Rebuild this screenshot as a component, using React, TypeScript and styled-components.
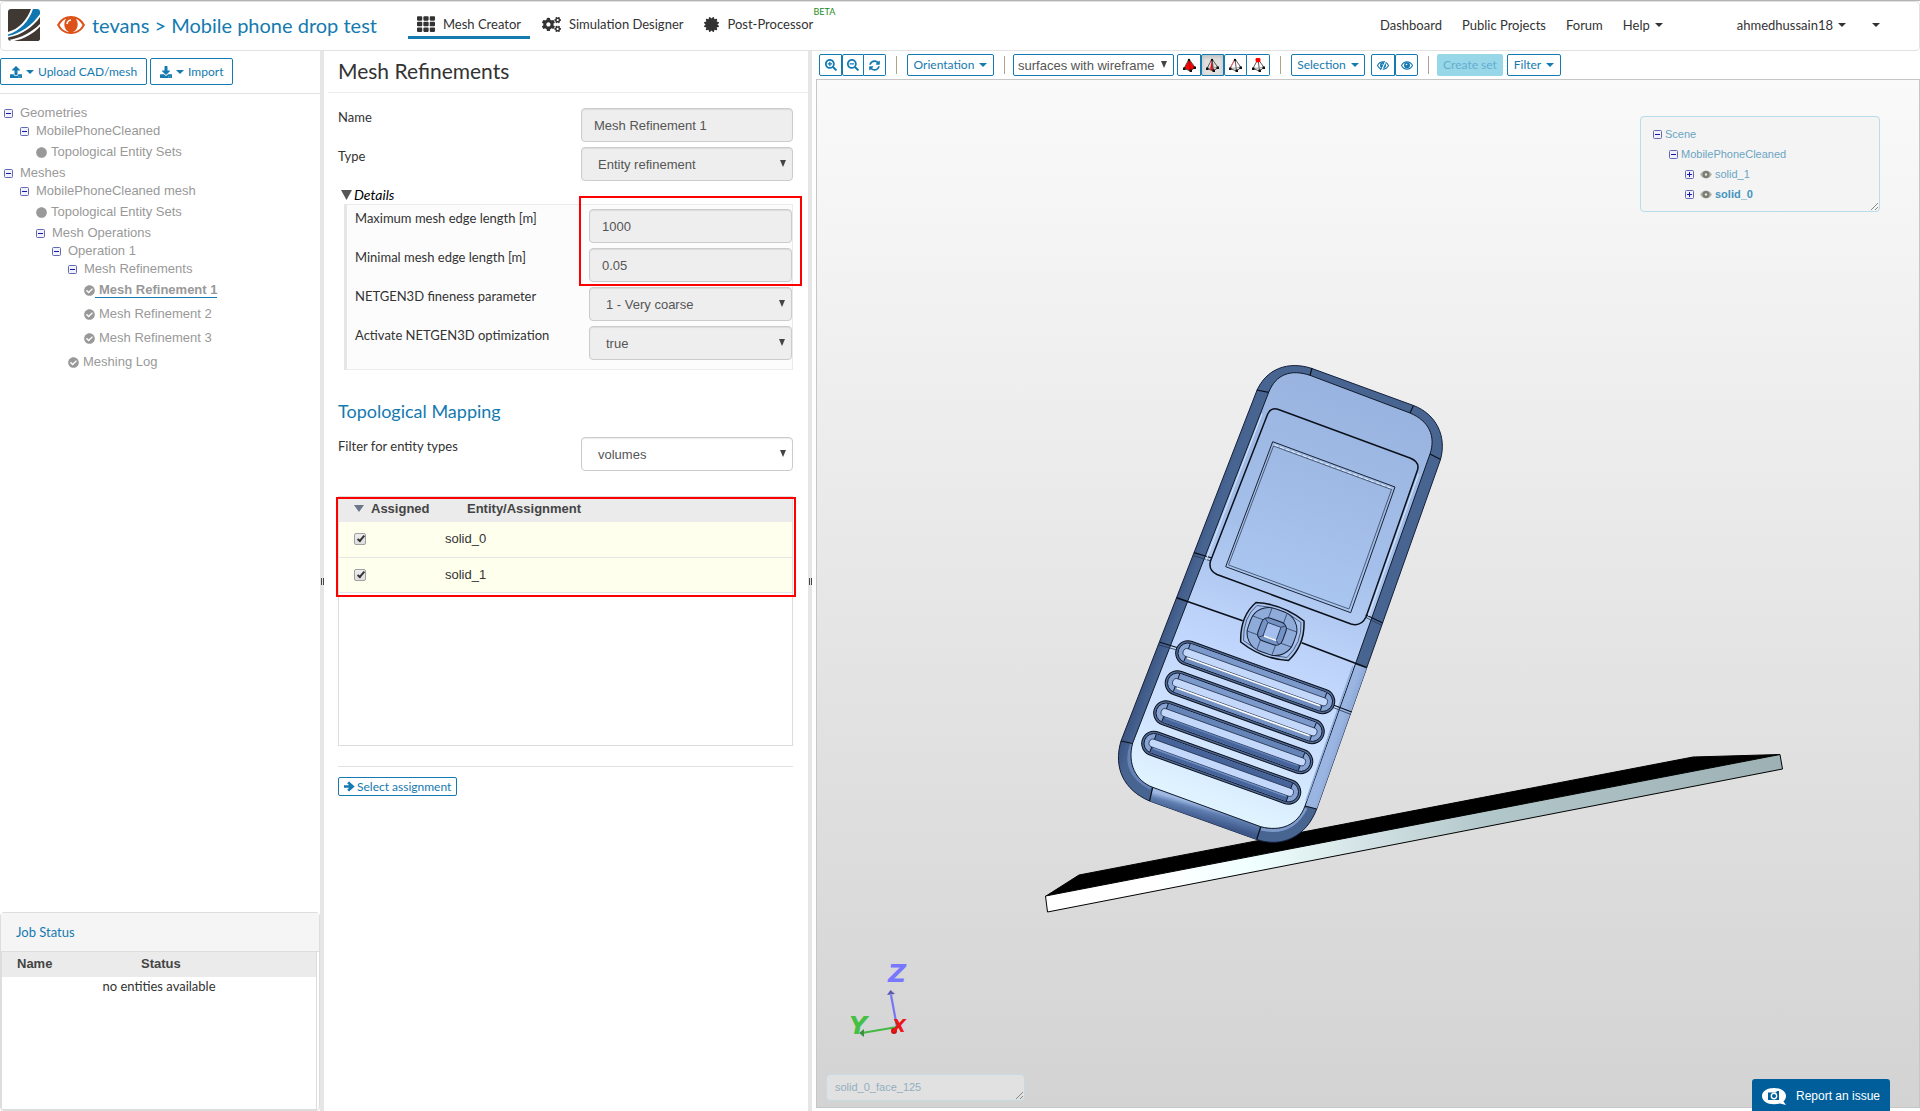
import React from "react";
import styled, { createGlobalStyle, css } from "styled-components";
import {
  FaUpload, FaDownload, FaTh, FaCogs, FaCertificate, FaSearchPlus, FaSearchMinus,
  FaSyncAlt, FaCheckCircle, FaCircle,
} from "react-icons/fa";

const blue = "#147ab0";
const sans = '"Liberation Sans", Arial, sans-serif';
const lato = 'Lato, "Liberation Sans", sans-serif';

const GlobalStyle = createGlobalStyle`
  *, *::before, *::after { box-sizing: border-box; }
  body { margin: 0; background: #fff; color: #333; font: 13px/20px ${lato}; }
  button, input, select { margin: 0; font: inherit; color: inherit; }
  svg { display: block; flex: none; }
  ul { list-style: none; margin: 0; padding: 0; }
  a { color: inherit; text-decoration: none; }
`;

const Page = styled.div`
  display: grid;
  grid-template-rows: auto 1fr;
  height: 100vh;
  min-height: 960px;
  border-top: 1px solid #b4b4b4;
`;

/* ---------- header ---------- */
const Header = styled.header`
  display: flex;
  align-items: center;
  height: 50px;
  padding: 0 39px 2px 7px;
  border: 1px solid #e2e2e2;
  border-radius: 4px;
`;
const ProjectLink = styled.a`
  display: flex;
  align-items: center;
  gap: 7px;
  margin-left: 17px;
  font-size: 20px;
  line-height: 24px;
  color: ${blue};
`;
const Tabs = styled.nav`
  display: flex;
  gap: 3px;
  margin: 0 0 2px 31px;
`;
const Tab = styled.a<{ $active?: boolean }>`
  position: relative;
  display: flex;
  align-items: center;
  gap: 8px;
  height: 30px;
  padding: 3px 9px 0;
  border-bottom: 3px solid ${(p) => (p.$active ? blue : "transparent")};
`;
const Beta = styled.span`
  position: absolute;
  top: -3px;
  right: -13px;
  font-size: 9px;
  line-height: 12px;
  color: #1d8c1d;
`;
const NavLinks = styled.nav`
  display: flex;
  align-items: center;
  gap: 20px;
  margin-left: auto;
`;
const NavLink = styled.a<{ $gap?: number }>`
  display: flex;
  align-items: center;
  gap: 5px;
  min-height: 20px;
  margin-left: ${(p) => p.$gap || 0}px;
`;
const Caret = styled.i`
  border: 4px solid transparent;
  border-top-color: currentColor;
  border-bottom: 0;
`;

/* ---------- columns ---------- */
const Columns = styled.main`
  display: grid;
  grid-template-columns: 320px 4px 484px 4px minmax(0, 1fr);
  min-height: 0;
`;
const Splitter = styled.div`
  display: flex;
  align-items: center;
  justify-content: center;
  background: #e6e6e6;
  &::after {
    content: "";
    width: 3px;
    height: 7px;
    border: solid #444;
    border-width: 0 1px;
  }
`;
const Sidebar = styled.aside`
  display: flex;
  flex-direction: column;
  min-height: 0;
`;
const SideTools = styled.div`
  display: flex;
  gap: 3px;
  padding: 7px 0 8px;
  border-bottom: 1px solid #e2e2e2;
`;
const buttonLook = css`
  display: flex;
  align-items: center;
  justify-content: center;
  border: 1px solid ${blue};
  border-radius: 2px;
  background: #fff;
  color: ${blue};
  font-size: 12px;
  white-space: nowrap;
`;
const SideButton = styled.button`
  ${buttonLook}
  gap: 4px;
  height: 27px;
  padding: 0 9px;
`;
const Tree = styled.ul`
  flex: 1;
  && { padding-top: 10px; }
  font-family: ${sans};
  font-size: 13px;
  color: #999;
`;
const TreeRow = styled.li<{ $level: number; $leaf?: boolean }>`
  display: flex;
  align-items: center;
  height: ${(p) => (p.$leaf ? 24 : 18)}px;
  padding-left: ${(p) => 4 + p.$level * 16}px;
`;
const TreeText = styled.a<{ $current?: boolean; $leaf?: boolean }>`
  padding-left: ${(p) => (p.$leaf ? 4 : 7)}px;
  line-height: 15px;
  border-bottom: 1px solid transparent;
  ${(p) => p.$current && css`font-weight: bold; border-color: ${blue};`}
`;
const JobPanel = styled.section`
  display: flex;
  flex-direction: column;
  height: 199px;
  padding-right: 2px;
  border: 1px solid #ddd;
  border-radius: 4px;
`;
const JobTitle = styled.h2`
  margin: 0 -2px 0 0;
  padding: 9px 15px;
  border-bottom: 1px solid #ddd;
  background: #f5f5f5;
  font-size: 13px;
  line-height: 20px;
  font-weight: 400;
  color: ${blue};
`;
const JobTableBox = styled.div`
  flex: 1;
  border: 1px solid #ddd;
  border-top: 0;
`;
const DataTable = styled.table`
  width: 100%;
  table-layout: fixed;
  border-collapse: collapse;
  td { padding: 0; }
`;
const HeadCell = styled.th<{ $width?: number; $indent: number }>`
  width: ${(p) => (p.$width ? p.$width + "px" : "auto")};
  height: 25px;
  padding: 0 0 2px ${(p) => p.$indent}px;
  background: #ebebeb;
  font: bold 13px/20px ${sans};
  color: #444;
  text-align: left;
`;
const EmptyCell = styled.td`
  line-height: 18px;
  text-align: center;
`;

/* ---------- form ---------- */
const FormPanel = styled.section`
  padding-left: 4px;
`;
const PanelTitle = styled.h1`
  margin: 0;
  padding: 6px 10px 7px;
  border-bottom: 1px solid #ebebeb;
  font-size: 21px;
  line-height: 28px;
  font-weight: 400;
`;
const FormBody = styled.div`
  padding: 15px 15px 0 10px;
`;
const Field = styled.div`
  display: flex;
  justify-content: space-between;
  margin-bottom: 5px;
`;
const FieldLabel = styled.label`
  line-height: 18px;
`;
const control = css<{ $width?: number }>`
  width: ${(p) => p.$width || 212}px;
  height: 34px;
  border: 1px solid #ccc;
  border-radius: 4px;
  background: #fff;
  box-shadow: inset 0 1px 1px rgba(0, 0, 0, 0.08);
  font: 13px/20px ${sans};
  color: #555;
  &:disabled { background: #eee; opacity: 1; }
`;
const TextBox = styled.input`
  ${control}
  padding: 0 12px;
`;
const SelectFrame = styled.span`
  position: relative;
  display: flex;
  svg { position: absolute; right: 7px; top: 50%; margin-top: -4px; pointer-events: none; }
`;
const SelectControl = styled.select`
  ${control}
  padding: 1px 16px 0;
  appearance: none;
`;
const Details = styled.section`
  margin: 0 0 29px 6px;
`;
const Summary = styled.h3`
  display: flex;
  align-items: center;
  gap: 2px;
  margin: -1px 0 -1px -3px;
  font-size: 14px;
  line-height: 20px;
  font-style: italic;
  font-weight: 400;
  color: #000;
`;
const DetailBox = styled.div`
  position: relative;
  padding: 4px 0 4px 8px;
  border: 1px solid #ebebeb;
  border-left: 3px solid #e6e6e6;
  background: #fcfcfc;
`;
const Marker = styled.div<{ $inset: string }>`
  position: absolute;
  inset: ${(p) => p.$inset};
  border: 2px solid #f00;
  pointer-events: none;
`;
const SectionTitle = styled.h2`
  margin: 0 0 14px;
  font-size: 18px;
  line-height: 24px;
  font-weight: 400;
  color: ${blue};
`;
const AssignBox = styled.div`
  position: relative;
  height: 250px;
  margin: 25px 0 20px;
  border: 1px solid #ddd;
`;
const AssignRow = styled.tr`
  height: 35px;
  border-bottom: 1px solid #e6e6e6;
  background: #ffffed;
  font: 13px/20px ${sans};
`;
const CheckCell = styled.td`
  && { padding-left: 15px; }
`;
const CheckBox = styled.input`
  display: block;
  appearance: none;
  width: 12px;
  height: 12px;
  border: 1px solid #a0a0a0;
  border-radius: 2px;
  background: linear-gradient(#eee, #ddd);
  &:checked::after {
    content: "";
    display: block;
    width: 4px;
    height: 8px;
    margin: 0 0 0 4px;
    border: solid #333;
    border-width: 0 2px 2px 0;
    transform: rotate(40deg);
  }
`;
const SortLabel = styled.span`
  display: flex;
  align-items: center;
  gap: 7px;
`;
const Footer = styled.div`
  display: flex;
  padding-top: 10px;
  border-top: 1px solid #e2e2e2;
`;
const SmallButton = styled.button`
  ${buttonLook}
  gap: 2px;
  height: 19px;
  padding: 0 5px 0 5px;
`;

/* ---------- viewer ---------- */
const Viewer = styled.section`
  display: flex;
  flex-direction: column;
  min-height: 0;
  padding: 3px 0 3px 4px;
`;
const Toolbar = styled.div`
  display: flex;
  align-items: center;
  height: 22px;
  margin: 0 0 3px 3px;
`;
const Group = styled.div<{ $gap: number }>`
  display: flex;
  margin-left: ${(p) => p.$gap}px;
`;
const ToolButton = styled.button<{ $width: number; $on?: boolean; $flat?: boolean; $gap?: number }>`
  ${buttonLook}
  gap: 5px;
  width: ${(p) => p.$width}px;
  height: 22px;
  padding: 0;
  margin-left: ${(p) => p.$gap || 0}px;
  ${(p) => p.$on && css`background: #e0e0e0; box-shadow: inset 0 2px 4px rgba(0, 0, 0, 0.15);`}
  ${(p) => p.$flat && css`background: #98d7e8; border-color: #98d7e8; color: #64aed0;`}
  ${Group} > & + & { border-left: 0; }
  ${Group} > &:not(:last-child) { border-top-right-radius: 0; border-bottom-right-radius: 0; }
  ${Group} > & + & { border-top-left-radius: 0; border-bottom-left-radius: 0; }
`;
const Divider = styled.span<{ $tight?: boolean }>`
  width: 1px;
  height: 18px;
  margin: 0 ${(p) => (p.$tight ? 8 : 10)}px 0 10px;
  background: #b0a28c;
`;
const ModeSelect = styled.select`
  width: 161px;
  height: 22px;
  padding: 2px 4px 0;
  border: 1px solid ${blue};
  border-radius: 2px;
  background: #fff;
  appearance: none;
  font: 13px/18px ${sans};
  color: #555;
`;
const Canvas = styled.div`
  position: relative;
  flex: 1;
  min-height: 0;
  border: 1px solid #c6c6c6;
  background: linear-gradient(#fafafa, #d3d3d3);
  overflow: hidden;
`;
const Model = styled.svg`
  width: 100%;
  height: 100%;
`;
const ScenePanel = styled.ul`
  position: absolute;
  top: 36px;
  right: 39px;
  width: 240px;
  height: 96px;
  && { padding: 7px 12px; }
  border: 1px solid #b8dcea;
  border-radius: 4px;
  background: #f4f4f4;
  font: 11px/20px ${sans};
  color: #6ba5c3;
`;
const SceneRow = styled.li<{ $level: number; $current?: boolean }>`
  display: flex;
  align-items: center;
  gap: 3px;
  height: 20px;
  padding-left: ${(p) => p.$level * 16}px;
  ${(p) => p.$current && css`font-weight: bold; color: #4394bd;`}
  svg + svg { margin-left: 3px; }
`;
const Grip = styled.svg`
  position: absolute;
  right: 1px;
  bottom: 1px;
`;
const PickedFace = styled.div`
  position: absolute;
  left: 9px;
  bottom: 6px;
  width: 199px;
  height: 27px;
  padding: 0 8px;
  border: 1px solid #c6dae3;
  border-radius: 4px;
  background: #e1e1e1;
  font: 11px/25px ${sans};
  color: #92afbf;
`;
const ReportButton = styled.button`
  position: fixed;
  right: 30px;
  bottom: 0;
  display: flex;
  align-items: center;
  gap: 10px;
  width: 138px;
  height: 32px;
  padding: 2px 10px 0;
  border: 0;
  border-radius: 3px 3px 0 0;
  background: #005f9b;
  color: #fff;
  font: 12px/20px ${sans};
  white-space: nowrap;
`;

/* ---------- small drawings ---------- */
const Logo = () => (
  <svg width="32" height="32" viewBox="0 0 32 32" aria-label="Home">
    <rect width="32" height="32" rx="3" fill="#3f3833" />
    <path d="M0 23C11 20 19 11 23 0h9v17.500C25 25 16 30 6 32H3L0 30z" fill="#fff" />
    <path d="M0 25.500C12 22 21 12 25 0h4q3 0 3 3v2C24 16 14 24 0 27z" fill="#0f76b1" />
    <path d="M0 28.500C14 26 25 18 32 8v7C24 23 13 29 1 31q-1-1-1-2.500z" fill="#3f3833" />
    <path d="M10 32C19 29 27 24 32 19v10q0 3-3 3z" fill="#3f3833" />
  </svg>
);
const BigEye = () => (
  <svg width="28" height="18" viewBox="0 0 28 18">
    <path d="M0 9C6-3 22-3 28 9 22 21 6 21 0 9z" fill="#dd5218" />
    <path d="M2.500 9C5 5 7 3.500 9 3 6 7 7 14 12 16 7 15.500 4 12 2.500 9zM25.500 9C23 5 21 3.500 19 3c3 4 2 11-3 13 5-.5 8-4 9.500-7z" fill="#fff" />
    <path d="M10 8q.5-3.500 4-4" fill="none" stroke="#fff" strokeWidth="1.500" />
  </svg>
);
const Eye = ({ color = blue, off = false }: { color?: string; off?: boolean }) => (
  <svg width="12" height="9" viewBox="0 0 12 9">
    <path d="M.5 4.500C3-.3 9-.3 11.500 4.500 9 9.300 3 9.300.5 4.500z" fill="none" stroke={color} strokeWidth="1.100" />
    <circle cx="6" cy="4.300" r="3" fill={color} />
    <circle cx="5.500" cy="3.500" r=".8" fill="#fff" />
    {off && <path d="M4.500 9L8.500 0" stroke="#fff" strokeWidth="1.500" />}
    {off && <path d="M3.500 9L7.500 0" stroke={color} strokeWidth="1" />}
  </svg>
);
const SceneEye = () => (
  <svg width="12" height="9" viewBox="0 0 12 9">
    <path d="M0 4.500C3-.8 9-.8 12 4.500 9 9.800 3 9.800 0 4.500z" fill="#b4b4ae" />
    <circle cx="6" cy="4.500" r="3.500" fill="#7b7b72" />
    <circle cx="6" cy="4.500" r="1.200" fill="#e8e8e0" />
  </svg>
);
const BoldArrow = () => (
  <svg width="11" height="11" viewBox="0 0 11 11">
    <path d="M0 4.200h5.200L3.200 2.200 5 .4 10.700 5.500 5 10.600 3.200 8.800 5.200 6.800H0z" fill={blue} />
  </svg>
);
const Toggle = ({ open = true }: { open?: boolean }) => (
  <svg width="9" height="9" viewBox="0 0 9 9">
    <rect x=".5" y=".5" width="8" height="8" rx="1" fill="#f1f1fa" stroke="#6468b0" />
    <path d={open ? "M2 4.500h5" : "M2 4.500h5M4.500 2v5"} stroke="#1717b0" />
  </svg>
);
const Arrow = ({ w = 6, h = 7, color = "#444" }) => (
  <svg width={w} height={h} viewBox="0 0 10 10" preserveAspectRatio="none">
    <path d="M0 0h10L5 10z" fill={color} />
  </svg>
);
const GripMark = () => (
  <Grip width="8" height="8" viewBox="0 0 8 8">
    <path d="M1 8L8 1M5 8L8 5" stroke="#888" />
  </Grip>
);
const MeshIcon = ({ kind }: { kind: number }) => (
  <svg width="13" height="14" viewBox="0 0 13 14">
    <path d="M6 1L1 10.500L7.500 13L12 9.500z" fill={kind === 0 ? "#f00" : "none"} stroke="#444" strokeWidth=".9" />
    {kind === 1 && <path d="M6 1L4 11.500L7.500 13z" fill="#f00" />}
    <path d="M6 1L7.500 13" stroke={kind === 0 ? "#a00" : "#444"} strokeWidth=".9" />
    {kind > 0 && <path d="M1 10.500L12 9.500" stroke="#777" strokeWidth=".7" />}
    {kind === 2 && <path d="M6 1L1 10.500" stroke="#f66" strokeWidth="1" />}
    <g fill="#111">
      <rect x="0" y="9.500" width="2.500" height="2.500" />
      <rect x="6.500" y="11.500" width="2.500" height="2.500" />
      <rect x="10.500" y="8.500" width="2.500" height="2.500" />
    </g>
    <circle cx="6" cy="2" r={kind === 3 ? 2.5 : 1.2} fill={kind === 3 ? "#f00" : "#111"} />
  </svg>
);

const grooves = [
  { x: 1188, y: 653, upper: "#7c99cb", lower: "#6e8bbd", shine: "#fff" },
  { x: 1177.5, y: 683, upper: "#7c99cb", lower: "#7390c2", shine: "#fff" },
  { x: 1166, y: 713, upper: "#6584b8", lower: "#46649a", shine: "#5f7fb5" },
  { x: 1154, y: 743.5, upper: "#46649a", lower: "#46649a", shine: "#6f8fc2" },
];

const Scene3D = () => (
  <Model viewBox="817 80 1102 1027" preserveAspectRatio="xMidYMid meet" aria-label="3D model">
    <defs>
      <linearGradient id="face" gradientUnits="userSpaceOnUse" x1="1360" y1="390" x2="1200" y2="830">
        <stop offset="0" stopColor="#98b3df" />
        <stop offset=".35" stopColor="#a4c0ea" />
        <stop offset=".6" stopColor="#c0d5fb" />
        <stop offset=".8" stopColor="#cfe3ff" />
        <stop offset="1" stopColor="#e6faff" />
      </linearGradient>
      <linearGradient id="screen" gradientUnits="userSpaceOnUse" x1="1335" y1="460" x2="1285" y2="600">
        <stop offset="0" stopColor="#9db8e2" />
        <stop offset="1" stopColor="#aac7f2" />
      </linearGradient>
      <linearGradient id="rim" gradientUnits="userSpaceOnUse" x1="1180" y1="570" x2="1194" y2="575">
        <stop offset="0" stopColor="#3a5280" />
        <stop offset="1" stopColor="#486592" />
      </linearGradient>
      <linearGradient id="lowRim" gradientUnits="userSpaceOnUse" x1="1335" y1="740" x2="1350" y2="745">
        <stop offset="0" stopColor="#9ab5e2" />
        <stop offset="1" stopColor="#7d99c8" />
      </linearGradient>
      <linearGradient id="bottomRim" gradientUnits="userSpaceOnUse" x1="1206" y1="806" x2="1202" y2="821">
        <stop offset="0" stopColor="#9fb9e4" />
        <stop offset=".35" stopColor="#5f7db0" />
        <stop offset="1" stopColor="#3d5788" />
      </linearGradient>
      <linearGradient id="plate">
        <stop offset="0" stopColor="#fff" />
        <stop offset=".15" stopColor="#fff" />
        <stop offset=".28" stopColor="#f0ffff" />
        <stop offset=".45" stopColor="#d0e0e2" />
        <stop offset=".6" stopColor="#b2c7ca" />
        <stop offset="1" stopColor="#9db1b5" />
      </linearGradient>
    </defs>

    <path d="M1046 896L1079 875L1693 757L1780 754.500z" fill="#000" stroke="#000" />
    <path d="M1045.500 896L1780 754.500L1782.500 769L1047.500 912z" fill="url(#plate)" stroke="#000" strokeWidth="1" />

    <path d="M1256.700 391C1266 369 1288 360.500 1312 368.500L1413.500 405.500C1436 414 1447 436 1440.500 459.500L1316.700 809C1306 837 1282 848 1256.700 839.500L1149.500 801C1124 790 1113 768 1121 741z" fill="url(#rim)" stroke="#14203a" strokeWidth="1" />
    <path d="M1366.700 668L1316.700 809L1305 806L1354 664z" fill="url(#lowRim)" />
    <path d="M1153 787L1149.500 801L1256.700 839.500L1261 826.500z" fill="url(#bottomRim)" />
    <path d="M1132.700 743Q1121 772 1151 788" fill="none" stroke="#6583b6" strokeWidth="4" />
    <path d="M1261 829Q1292 836 1306 808" fill="none" stroke="#7c99c9" strokeWidth="3" />
    <path d="M1268.700 392.300C1276 374 1291 369 1310 375.300L1410 413C1429 421 1436 436 1430 454L1305 806C1298 825 1281 832 1260.700 826.700L1152.700 787.300C1136 781 1127 764 1132.700 743z" fill="url(#face)" stroke="#111a2a" strokeWidth="1" />
    <path d="M1353 666L1306 801" stroke="#8fabd8" strokeWidth="1.500" />

    <g fill="none" stroke="#0b101a" strokeWidth="1.200">
      <path d="M1256.700 390L1268.700 392.300M1312 368L1310 375.500M1413.500 405.500L1410 413M1440.700 459.500L1430 454M1121 741L1132.700 743.500M1149.500 801L1152.700 787.300M1256.700 839.500L1260.700 826.700M1316.700 809L1305 806" />
      <path d="M1176.700 597.700L1242.700 620.700M1301.700 642.700L1366.500 667.500" strokeWidth="1.700" />
      <path d="M1194 552.700L1212 558M1160 642.300L1177 647.500M1365.700 614.700L1382.700 623M1333.300 705L1351.700 712" />
      <path d="M1193 555.500L1211 561M1159 645L1177 650M1365 617L1382 625.500M1333 707.500L1351 714.500" stroke="#26344f" strokeWidth=".8" />
      <path d="M1267.700 414Q1271 407 1278.500 409.500L1410 458Q1420 462 1417.500 470L1366 617Q1361 627 1351 624L1217 574.500Q1208 570 1210.500 561z" strokeWidth="1.500" />
    </g>
    <path d="M1262 414L1206 560M1418.500 474L1368.500 616" stroke="#d9e8ff" strokeWidth="1" fill="none" />

    <path d="M1272.700 441.700L1395 487L1350.700 612.700L1225.700 566.700z" fill="url(#screen)" stroke="#1a2232" strokeWidth="1" />
    <path d="M1274.500 445L1392 488.500" stroke="#f0f6ff" strokeDasharray="4 2" />
    <path d="M1273.500 446L1391.500 489.500L1349 609L1228.500 565z" fill="none" stroke="#35425c" strokeWidth=".8" />

    <path d="M1256 602.500Q1283 604 1304 621Q1305 645 1288.500 660.500Q1262 659 1240.700 642Q1240 616 1256 602.500z" fill="#a9c3ef" stroke="#0b101a" strokeWidth="1.500" />
    <path d="M1257 605.500Q1282 607 1301 622.500Q1302 643 1287 657.500Q1263 656 1243.500 640.500Q1243 617 1257 605.500z" fill="none" stroke="#33415f" strokeWidth=".8" />
    <g transform="translate(1272 631.500) rotate(20)">
      <rect x="-24" y="-22.500" width="48" height="45" rx="19" fill="#8eabd9" stroke="#162034" strokeWidth="1" />
      <path d="M-8-22V22M8-22V22M-24-8H24M-24 8H24" stroke="#2b3a59" strokeWidth=".7" />
      <rect x="-13" y="-12" width="26" height="24" rx="7" fill="#7592c5" stroke="#162034" strokeWidth="1" />
      <path d="M-11-10L-7-7M11-10L7-7M-11 10L-7 7M11 10L7 7" stroke="#22304c" strokeWidth=".7" />
      <rect x="-7" y="-7" width="14" height="14" fill="#a5c0ee" stroke="#22304c" strokeWidth=".8" />
      <path d="M-6 7H7" stroke="#fff" strokeWidth="1.500" />
    </g>

    {grooves.map((g) => (
      <g key={g.y} transform={`translate(${g.x} ${g.y}) rotate(19.800)`}>
        <rect x="-12.300" y="-12.300" width="167.500" height="24.600" rx="12.300" fill="#526b97" stroke="#0b101a" strokeWidth="1" />
        <rect x="-10" y="-10" width="163" height="20" rx="10" fill="#86a3d3" stroke="#10192b" strokeWidth=".9" />
        <path d="M-1-9.500H144V-2H-1z" fill={g.upper} />
        <path d="M-1 9.500H144V3H-1z" fill={g.lower} />
        <rect x="-5" y="-4" width="153" height="8" rx="4" fill="#c3d8fb" stroke="#1c2740" strokeWidth=".7" />
        <path d="M1 5H142" stroke={g.shine} strokeWidth="1.500" />
        <path d="M-1-9.500V-4M-1 4V9.500M144-9.500V-4M144 4V9.500" stroke="#10192b" strokeWidth=".9" />
      </g>
    ))}

    <g strokeWidth="2.200" fill="none">
      <path d="M897 1027L891 995" stroke="#7777f2" />
      <path d="M897 1027L862 1033" stroke="#44b944" />
    </g>
    <path d="M887 995L890.500 990L895 994z" fill="#5a5ab0" />
    <path d="M859 1033L864 1029V1037z" fill="#3c923c" />
    <circle cx="894" cy="1031" r="3" fill="#c81010" />
    <g fontFamily="DejaVu Sans, sans-serif" fontWeight="bold" fontStyle="italic">
      <text x="888" y="982" fontSize="25" fill="#7777ff">Z</text>
      <text x="849" y="1034" fontSize="25" fill="#44c044">Y</text>
      <text x="892" y="1032" fontSize="18" fill="#ee1515">X</text>
    </g>
  </Model>
);

type Node = { text: string; level: number; kind?: "dot" | "check"; current?: boolean };
const nodes: Node[] = [
  { text: "Geometries", level: 0 },
  { text: "MobilePhoneCleaned", level: 1 },
  { text: "Topological Entity Sets", level: 2, kind: "dot" },
  { text: "Meshes", level: 0 },
  { text: "MobilePhoneCleaned mesh", level: 1 },
  { text: "Topological Entity Sets", level: 2, kind: "dot" },
  { text: "Mesh Operations", level: 2 },
  { text: "Operation 1", level: 3 },
  { text: "Mesh Refinements", level: 4 },
  { text: "Mesh Refinement 1", level: 5, kind: "check", current: true },
  { text: "Mesh Refinement 2", level: 5, kind: "check" },
  { text: "Mesh Refinement 3", level: 5, kind: "check" },
  { text: "Meshing Log", level: 4, kind: "check" },
];

type ChoiceProps = { id: string; value: string; disabled?: boolean; width?: number };
const Choice = ({ id, value, disabled, width }: ChoiceProps) => (
  <SelectFrame>
    <SelectControl id={id} disabled={disabled} $width={width}>
      <option>{value}</option>
    </SelectControl>
    <Arrow />
  </SelectFrame>
);

const meshModes = ["Volumes", "Faces", "Edges", "Points"];

export default function App() {
  return (
    <Page>
      <GlobalStyle />
      <Header>
        <Logo />
        <ProjectLink href="#"><BigEye />tevans &gt; Mobile phone drop test</ProjectLink>
        <Tabs>
          <Tab href="#" $active><FaTh size={18} />Mesh Creator</Tab>
          <Tab href="#"><FaCogs size={19} />Simulation Designer</Tab>
          <Tab href="#"><FaCertificate size={15} />Post-Processor<Beta>BETA</Beta></Tab>
        </Tabs>
        <NavLinks>
          <NavLink href="#">Dashboard</NavLink>
          <NavLink href="#">Public Projects</NavLink>
          <NavLink href="#">Forum</NavLink>
          <NavLink href="#">Help<Caret /></NavLink>
          <NavLink href="#" $gap={54}>ahmedhussain18<Caret /></NavLink>
          <NavLink href="#" $gap={6} aria-label="More"><Caret /></NavLink>
        </NavLinks>
      </Header>

      <Columns>
        <Sidebar>
          <SideTools>
            <SideButton><FaUpload size={12} /><Caret />Upload CAD/mesh</SideButton>
            <SideButton><FaDownload size={12} /><Caret />Import</SideButton>
          </SideTools>
          <Tree>
            {nodes.map((n, i) => (
              <TreeRow key={i} $level={n.level} $leaf={!!n.kind}>
                {!n.kind && <Toggle />}
                {n.kind === "dot" && <FaCircle size={11} />}
                {n.kind === "check" && <FaCheckCircle size={11} />}
                <TreeText href="#" $leaf={!!n.kind} $current={n.current}>{n.text}</TreeText>
              </TreeRow>
            ))}
          </Tree>
          <JobPanel>
            <JobTitle>Job Status</JobTitle>
            <JobTableBox>
              <DataTable>
                <thead>
                  <tr>
                    <HeadCell $width={124} $indent={15}>Name</HeadCell>
                    <HeadCell $indent={15}>Status</HeadCell>
                  </tr>
                </thead>
                <tbody><tr><EmptyCell colSpan={2}>no entities available</EmptyCell></tr></tbody>
              </DataTable>
            </JobTableBox>
          </JobPanel>
        </Sidebar>
        <Splitter />

        <FormPanel>
          <PanelTitle>Mesh Refinements</PanelTitle>
          <FormBody>
            <Field>
              <FieldLabel htmlFor="name">Name</FieldLabel>
              <TextBox id="name" defaultValue="Mesh Refinement 1" disabled />
            </Field>
            <Field>
              <FieldLabel htmlFor="type">Type</FieldLabel>
              <Choice id="type" value="Entity refinement" disabled />
            </Field>
            <Details>
              <Summary><Arrow w={11} h={10} color="#555" />Details</Summary>
              <DetailBox>
                <Field>
                  <FieldLabel htmlFor="max">Maximum mesh edge length [m]</FieldLabel>
                  <TextBox id="max" defaultValue="1000" disabled $width={203} />
                </Field>
                <Field>
                  <FieldLabel htmlFor="min">Minimal mesh edge length [m]</FieldLabel>
                  <TextBox id="min" defaultValue="0.05" disabled $width={203} />
                </Field>
                <Field>
                  <FieldLabel htmlFor="fine">NETGEN3D fineness parameter</FieldLabel>
                  <Choice id="fine" value="1 - Very coarse" disabled width={203} />
                </Field>
                <Field>
                  <FieldLabel htmlFor="opt">Activate NETGEN3D optimization</FieldLabel>
                  <Choice id="opt" value="true" disabled width={203} />
                </Field>
                <Marker $inset="-9px -10px 83px 232px" />
              </DetailBox>
            </Details>
            <SectionTitle>Topological Mapping</SectionTitle>
            <Field>
              <FieldLabel htmlFor="filter">Filter for entity types</FieldLabel>
              <Choice id="filter" value="volumes" />
            </Field>
            <AssignBox>
              <DataTable>
                <thead>
                  <tr>
                    <HeadCell $width={106} $indent={15}>
                      <SortLabel><Arrow w={10} h={7} color="#6a7788" />Assigned</SortLabel>
                    </HeadCell>
                    <HeadCell $indent={22}>Entity/Assignment</HeadCell>
                  </tr>
                </thead>
                <tbody>
                  {["solid_0", "solid_1"].map((s) => (
                    <AssignRow key={s}>
                      <CheckCell><CheckBox type="checkbox" defaultChecked aria-label={s} /></CheckCell>
                      <td>{s}</td>
                    </AssignRow>
                  ))}
                </tbody>
              </DataTable>
              <Marker $inset="0 -4px 148px -3px" />
            </AssignBox>
            <Footer>
              <SmallButton><BoldArrow />Select assignment</SmallButton>
            </Footer>
          </FormBody>
        </FormPanel>
        <Splitter />

        <Viewer>
          <Toolbar>
            <Group $gap={0}>
              <ToolButton $width={23} aria-label="Zoom in"><FaSearchPlus size={12} /></ToolButton>
              <ToolButton $width={22} aria-label="Zoom out"><FaSearchMinus size={12} /></ToolButton>
              <ToolButton $width={22} aria-label="Refresh"><FaSyncAlt size={11} /></ToolButton>
            </Group>
            <Divider />
            <ToolButton $width={87}>Orientation<Caret /></ToolButton>
            <Divider $tight />
            <SelectFrame>
              <ModeSelect aria-label="Render mode"><option>surfaces with wireframe</option></ModeSelect>
              <Arrow />
            </SelectFrame>
            <Group $gap={3}>
              {meshModes.map((m, k) => (
                <ToolButton key={m} $width={k === 0 ? 24 : 23} $on={k === 1} aria-label={m}>
                  <MeshIcon kind={k} />
                </ToolButton>
              ))}
            </Group>
            <Divider />
            <ToolButton $width={74}>Selection<Caret /></ToolButton>
            <Group $gap={6}>
              <ToolButton $width={24} aria-label="Hide"><Eye off /></ToolButton>
              <ToolButton $width={23} aria-label="Show"><Eye /></ToolButton>
            </Group>
            <Divider $tight />
            <ToolButton $width={66} $flat disabled>Create set</ToolButton>
            <ToolButton $width={54} $gap={4}>Filter<Caret /></ToolButton>
          </Toolbar>
          <Canvas>
            <Scene3D />
            <ScenePanel>
              <SceneRow $level={0}><Toggle />Scene</SceneRow>
              <SceneRow $level={1}><Toggle />MobilePhoneCleaned</SceneRow>
              <SceneRow $level={2}><Toggle open={false} /><SceneEye />solid_1</SceneRow>
              <SceneRow $level={2} $current><Toggle open={false} /><SceneEye />solid_0</SceneRow>
              <GripMark />
            </ScenePanel>
            <PickedFace>solid_0_face_125<GripMark /></PickedFace>
          </Canvas>
        </Viewer>
      </Columns>

      <ReportButton>
        <svg width="24" height="17" viewBox="0 0 24 17">
          <path d="M12 0C19 0 24 3.500 24 8c0 2-1 4-2.500 5.500L24 17l-6-1.500C8 18 0 14 0 8 0 3.500 5 0 12 0z" fill="#fff" />
          <path d="M6 4.500h8l1-1.500h2v9H6z" fill="#005f9b" />
          <circle cx="12" cy="8" r="2.700" fill="none" stroke="#fff" strokeWidth="1.400" />
        </svg>
        Report an issue
      </ReportButton>
    </Page>
  );
}
